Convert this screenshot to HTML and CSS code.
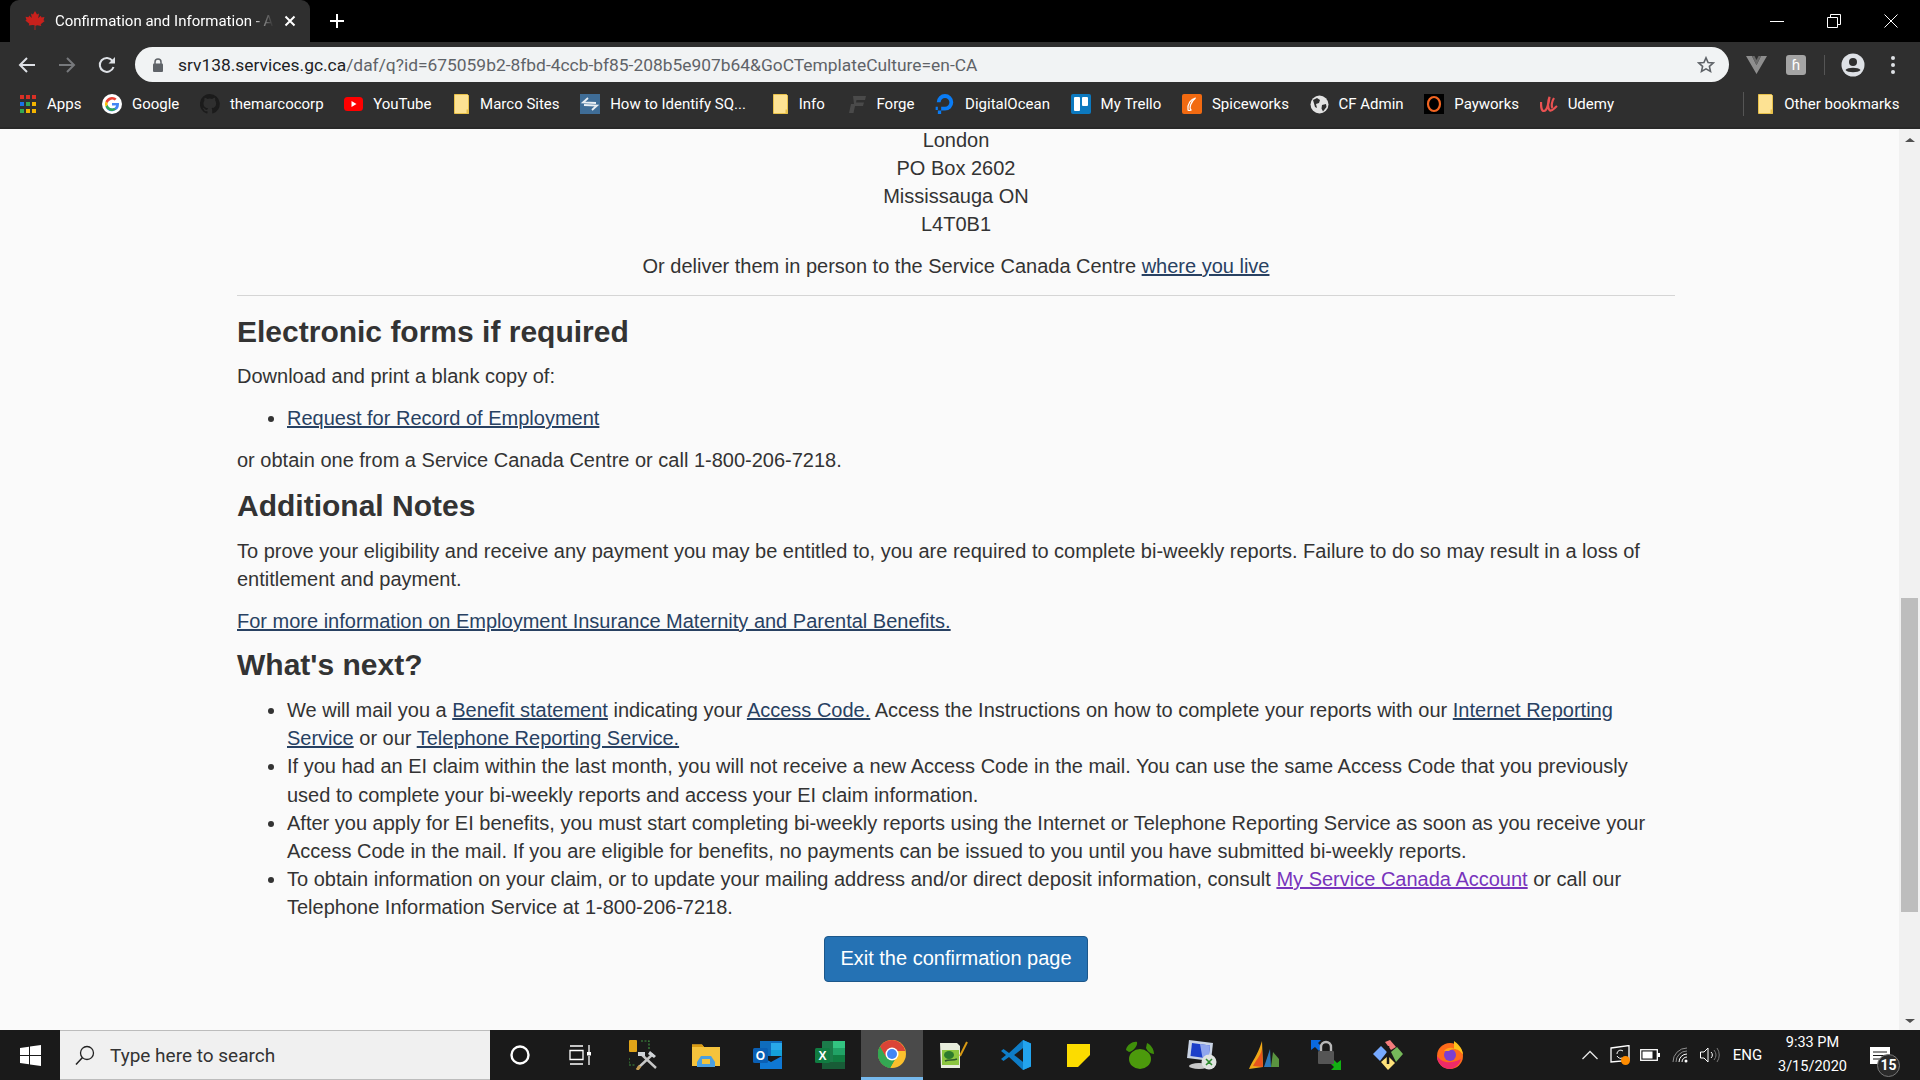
FILE: index.html
```html
<!DOCTYPE html>
<html lang="en">

<head>
    <meta charset="utf-8">
    <title>Confirmation and Information</title>
    <link rel="stylesheet" href="styles.css">
</head>

<body>
    <div class="tabstrip">
        <div class="tab">
            <svg class="favicon" width="20" height="20" viewBox="0 0 20 20"><path fill="#c8211c" d="M10 0l2 3.6 2-1-.8 4.6 2.6-2.4.7 1.7 3-.5-1 3.2 1.2.7-4 3.3.6 1.7-4-.6-1.9.4V19h-.8v-4.7l-1.9-.4-4 .6.6-1.7-4-3.3L1.500 9l-1-3.200 3 .5.7-1.700 2.600 2.400-.8-4.600 2 1z"/></svg>
            <span class="tab-title">Confirmation and Information - Apply</span>
            <svg class="tab-close" width="12" height="12" viewBox="0 0 12 12"><path d="M1.500 1.500l9 9m0-9l-9 9" stroke="#fff" stroke-width="2"/></svg>
        </div>
        <svg class="new-tab" width="16" height="16" viewBox="0 0 16 16"><path d="M8 1v14M1 8h14" stroke="#fff" stroke-width="2"/></svg>
        <div class="window-btns">
            <svg width="14" height="14" viewBox="0 0 14 14"><path d="M0 7.500h14" stroke="#fff"/></svg>
            <svg width="14" height="14" viewBox="0 0 14 14"><path d="M.5 3.500h10v10H.5zM3.500 3.500V.5h10v10h-3" fill="none" stroke="#fff"/></svg>
            <svg width="14" height="14" viewBox="0 0 14 14"><path d="M.5.5l13 13m0-13l-13 13" stroke="#fff"/></svg>
        </div>
    </div>

    <div class="toolbar">
        <svg class="nav-icon" width="18" height="18" viewBox="0 0 18 18"><path d="M17 9H2M9 2L2 9l7 7" fill="none" stroke="#dee1e6" stroke-width="2"/></svg>
        <svg class="nav-icon" width="18" height="18" viewBox="0 0 18 18"><path d="M1 9h15M9 2l7 7-7 7" fill="none" stroke="#77797c" stroke-width="2"/></svg>
        <svg class="nav-icon" width="18" height="18" viewBox="0 0 18 18"><path d="M15.500 11a7 7 0 1 1-1-6.200" fill="none" stroke="#dee1e6" stroke-width="2"/><path d="M17 1v6.500h-6.500z" fill="#dee1e6"/></svg>
        <div class="urlbar">
            <svg width="12" height="14" viewBox="0 0 12 14"><path d="M3 6V4a3 3 0 0 1 6 0v2" fill="none" stroke="#5f6368" stroke-width="1.500"/><rect x="1" y="5.500" width="10" height="8.500" rx="1" fill="#5f6368"/></svg>
            <span class="url"><b>srv138.services.gc.ca</b>/daf/q?id=675059b2-8fbd-4ccb-bf85-208b5e907b64&amp;GoCTemplateCulture=en-CA</span>
            <svg class="star" width="18" height="18" viewBox="0 0 18 18"><path d="M9 1.800l2.100 4.700 5.100.5-3.800 3.400 1.100 5-4.500-2.600-4.500 2.600 1.100-5L1.800 7l5.100-.5z" fill="none" stroke="#5f6368" stroke-width="1.600"/></svg>
        </div>
        <svg class="ext-v" width="21" height="20" viewBox="0 0 21 20"><path d="M0 1h6l4.500 9L15 1h6L10.500 19z" fill="#8e8e8e"/><path d="M6 1h2.500l2 4 2-4H15l-4.500 9z" fill="#6a6a6a"/></svg>
        <div class="ext-h">ɦ</div>
        <i class="tool-sep"></i>
        <svg class="avatar" width="24" height="24" viewBox="0 0 24 24"><circle cx="12" cy="12" r="11.500" fill="#dee1e6"/><circle cx="12" cy="9" r="4" fill="#2f2f2f"/><path d="M4.500 17c2-3 13-3 15 0-2 3-13 3-15 0z" fill="#2f2f2f"/></svg>
        <svg class="dots" width="6" height="20" viewBox="0 0 6 20"><circle cx="3" cy="3" r="2" fill="#dee1e6"/><circle cx="3" cy="10" r="2" fill="#dee1e6"/><circle cx="3" cy="17" r="2" fill="#dee1e6"/></svg>
    </div>

    <div class="bookmarks">
        <a class="bm">
            <svg width="17" height="18" viewBox="0 0 17 18"><g><rect width="4" height="4" fill="#d93025"/><rect x="6" width="4" height="4" fill="#d93025"/><rect x="12" width="4" height="4" fill="#d93025"/><rect y="7" width="4" height="4" fill="#1a73e8"/><rect x="6" y="7" width="4" height="4" fill="#34a853"/><rect x="12" y="7" width="4" height="4" fill="#f4b400"/><rect y="14" width="4" height="4" fill="#34a853"/><rect x="6" y="14" width="4" height="4" fill="#f4b400"/><rect x="12" y="14" width="4" height="4" fill="#f4b400"/></g></svg>
            Apps
        </a>
        <a class="bm">
            <svg width="20" height="20" viewBox="0 0 20 20"><circle cx="10" cy="10" r="10" fill="#fff"/><path d="M10 9v2.600h4.200A4.400 4.400 0 0 1 5.700 11L3.500 12.700A7 7 0 0 0 17 10c0-.4 0-.7-.1-1z" fill="#4285f4"/><path d="M3.500 12.700A7 7 0 0 1 3.500 7.300L5.700 9a4.400 4.400 0 0 0 0 2z" fill="#fbbc05"/><path d="M3.500 7.300A7 7 0 0 1 14.600 4.800L12.700 6.600A4.400 4.400 0 0 0 5.700 9z" fill="#ea4335"/><path d="M3.500 12.700L5.700 11A4.400 4.400 0 0 0 12 13.900l2.100 1.700A7 7 0 0 1 3.500 12.700z" fill="#34a853"/></svg>
            Google
        </a>
        <a class="bm">
            <svg width="20" height="20" viewBox="0 0 20 20"><path d="M10 0a10 10 0 0 0-3.200 19.500c.5.100.7-.2.7-.5v-1.800c-2.800.6-3.400-1.300-3.400-1.300-.5-1.200-1.100-1.500-1.100-1.500-.9-.6.100-.6.100-.6 1 .1 1.500 1 1.500 1 .9 1.500 2.300 1.100 2.900.8.100-.6.300-1.100.6-1.300-2.200-.3-4.600-1.100-4.600-5 0-1.100.4-2 1-2.700-.1-.2-.4-1.300.1-2.700 0 0 .8-.3 2.700 1a9.500 9.500 0 0 1 5 0c1.900-1.300 2.700-1 2.700-1 .5 1.400.2 2.500.1 2.700.6.700 1 1.600 1 2.700 0 3.900-2.300 4.700-4.600 5 .4.300.7.900.7 1.900V19c0 .3.200.6.700.5A10 10 0 0 0 10 0z" fill="#1b1b1b"/></svg>
            themarcocorp
        </a>
        <a class="bm bm-wide">
            <svg width="19" height="20" viewBox="0 0 19 20"><rect y="3" width="19" height="14" rx="3.500" fill="#f00"/><path d="M7.500 7v6l5-3z" fill="#fff"/></svg>
            YouTube
        </a>
        <a class="bm">
            <svg class="folder" width="16" height="20" viewBox="0 0 16 20"><path d="M.5.500h13l1 1V19.500H.5z" fill="#fde293" stroke="#e8c14a"/><path d="M12.500 15.500h2.500v4h-2.500z" fill="#e8c14a"/></svg>
            Marco Sites
        </a>
        <a class="bm">
            <svg width="20" height="20" viewBox="0 0 20 20"><rect width="20" height="20" fill="#3f6d97"/><path d="M8 4L3 8.500l13 .5M12 16l5-4.500-13-.5" fill="none" stroke="#e8eef3" stroke-width="1.800"/></svg>
            <span class="bm-long">How to Identify SQ...</span>
        </a>
        <a class="bm bm-wider">
            <svg class="folder" width="16" height="20" viewBox="0 0 16 20"><path d="M.5.500h13l1 1V19.500H.5z" fill="#fde293" stroke="#e8c14a"/><path d="M12.500 15.500h2.500v4h-2.500z" fill="#e8c14a"/></svg>
            Info
        </a>
        <a class="bm">
            <svg width="17" height="17" viewBox="0 0 17 17"><path d="M4 0h13l-1 4H7.500L7 6.500h8l-1 3.500H6l-1.500 7H0l2-9H5z" fill="#4a4a4a"/></svg>
            Forge
        </a>
        <a class="bm">
            <svg width="20" height="22" viewBox="1.500 1.500 17 20"><path d="M10 17.500V14a4 4 0 1 0-4-4H2.500A7.500 7.500 0 1 1 10 17.500z" fill="#0a7cf5"/><path d="M6.500 14h3.500v3.500H6.500zM3.500 17.500h3v3h-3zM1.500 14h2v3h-2z" fill="#0a7cf5"/></svg>
            DigitalOcean
        </a>
        <a class="bm">
            <svg width="20" height="20" viewBox="0 0 20 20"><rect width="20" height="20" rx="2" fill="#0c79bf"/><rect x="3" y="3" width="6" height="14" rx="1" fill="#fff"/><rect x="11" y="3" width="6" height="9" rx="1" fill="#fff"/></svg>
            My Trello
        </a>
        <a class="bm">
            <svg width="20" height="20" viewBox="0 0 20 20"><rect width="20" height="20" rx="2" fill="#f26a11"/><path d="M13.500 4C9 5 5 10 6 16c1 1 2 .5 3 0-2-2-.5-8 4.500-12z" fill="none" stroke="#fff" stroke-width="1.200"/></svg>
            Spiceworks
        </a>
        <a class="bm">
            <svg width="19" height="19" viewBox="0 0 19 19"><circle cx="9.500" cy="9.500" r="9" fill="#e3e3e3"/><path d="M3 5l4-2 3 2-1 3-3 1 1 4-2-1zM12 10l4-1 .5 3-3.500 4.500-1.500-3z" fill="#2f2f2f"/></svg>
            CF Admin
        </a>
        <a class="bm">
            <svg width="20" height="20" viewBox="0 0 20 20"><rect width="20" height="20" fill="#000"/><ellipse cx="10" cy="10" rx="6" ry="7" fill="none" stroke="#f26522" stroke-width="2.200"/></svg>
            Payworks
        </a>
        <a class="bm">
            <svg width="18" height="18" viewBox="0 0 18 18"><path d="M1 7c0 4 0 9 3 9s5-9 5.500-14C8 6 7 13 10 15.500c2 1 4-2 7-4.500M14 3c-2 3-3 8-1.500 10" fill="none" stroke="#ea5252" stroke-width="2.200"/></svg>
            Udemy
        </a>
        <i class="bm-sep"></i>
        <a class="bm">
            <svg class="folder" width="16" height="20" viewBox="0 0 16 20"><path d="M.5.500h13l1 1V19.500H.5z" fill="#fde293" stroke="#e8c14a"/><path d="M12.500 15.500h2.500v4h-2.500z" fill="#e8c14a"/></svg>
            Other bookmarks
        </a>
    </div>

    <div class="viewport">
        <main class="page">
            <p class="center">
                London<br>
                PO Box 2602<br>
                Mississauga ON<br>
                L4T0B1
            </p>
            <p class="center">Or deliver them in person to the Service Canada Centre <a href="#">where you live</a></p>
            <hr>
            <h2>Electronic forms if required</h2>
            <p>Download and print a blank copy of:</p>
            <ul>
                <li><a href="#">Request for Record of Employment</a></li>
            </ul>
            <p>or obtain one from a Service Canada Centre or call 1-800-206-7218.</p>
            <h2>Additional Notes</h2>
            <p>To prove your eligibility and receive any payment you may be entitled to, you are required to complete bi-weekly reports. Failure to do so may result in a loss of entitlement and payment.</p>
            <p><a href="#">For more information on Employment Insurance Maternity and Parental Benefits.</a></p>
            <h2 class="next">What's next?</h2>
            <ul class="steps">
                <li>We will mail you a <a href="#">Benefit statement</a> indicating your <a href="#">Access Code.</a> Access the Instructions on how to complete your reports with our <a href="#">Internet Reporting Service</a> or our <a href="#">Telephone Reporting Service.</a></li>
                <li>If you had an EI claim within the last month, you will not receive a new Access Code in the mail. You can use the same Access Code that you previously used to complete your bi-weekly reports and access your EI claim information.</li>
                <li>After you apply for EI benefits, you must start completing bi-weekly reports using the Internet or Telephone Reporting Service as soon as you receive your Access Code in the mail. If you are eligible for benefits, no payments can be issued to you until you have submitted bi-weekly reports.</li>
                <li>To obtain information on your claim, or to update your mailing address and/or direct deposit information, consult <a class="visited" href="#">My Service Canada Account</a> or call our Telephone Information Service at 1-800-206-7218.</li>
            </ul>
            <div class="center">
                <a class="btn-exit" href="#">Exit the confirmation page</a>
            </div>
        </main>
        <div class="scrollbar">
            <svg width="12" height="6" viewBox="0 0 12 6"><path d="M6 1l5 4H1z" fill="#505050"/></svg>
            <div class="thumb-area"><div class="thumb"></div></div>
            <svg width="12" height="6" viewBox="0 0 12 6"><path d="M6 5L1 1h10z" fill="#505050"/></svg>
        </div>
    </div>

    <div class="taskbar">
        <div class="start">
            <svg width="21" height="21" viewBox="0 0 21 21"><path d="M0 3l9-1.300V10H0zM10 1.500L21 0v10H10zM0 11h9v8.300L0 18zM10 11h11v10l-11-1.500z" fill="#fff"/></svg>
        </div>
        <div class="search">
            <svg width="20" height="20" viewBox="0 0 20 20"><circle cx="12" cy="8" r="6.500" fill="none" stroke="#222" stroke-width="1.300"/><path d="M7.500 12.500L1 19.500" stroke="#222" stroke-width="1.500"/></svg>
            <span>Type here to search</span>
        </div>
        <div class="cell">
            <svg width="20" height="20" viewBox="0 0 20 20"><circle cx="10" cy="10" r="8.500" fill="none" stroke="#fff" stroke-width="2.400"/></svg>
        </div>
        <div class="cell">
            <svg width="22" height="20" viewBox="0 0 22 20"><path d="M1 1h13M1 5.500h13v9H1zM1 19h13M20 0v7M20 11v9" fill="none" stroke="#fff" stroke-width="1.300"/><rect x="18" y="7" width="4" height="3.500" fill="#fff"/></svg>
        </div>
        <div class="apps">
            <div class="app">
                <svg width="30" height="30" viewBox="0 0 30 30"><rect x="0" y="0" width="8" height="12" rx="1" fill="#e0a418"/><path d="M12 1h8v8M0 18v7h7" fill="none" stroke="#3f8f3f" stroke-dasharray="2 1.500" stroke-width="1.200"/><path d="M9 28l15-14M27 28L12 14" stroke="#c7c7c7" stroke-width="2.400"/><path d="M9 12h7v4H9zM21 11l6 5-2 2-6-4z" fill="#d0d4d8"/><path d="M11 26l-3 4" stroke="#c69c50" stroke-width="3"/></svg>
            </div>
            <div class="app">
                <svg width="28" height="24" viewBox="0 0 28 24"><path d="M0 1.500h10l2 2.500h16v19H0z" fill="#f5c33c"/><path d="M0 1.500h10l2 2.500H0z" fill="#d99a13"/><path d="M5 19l4-6h10l4 6v5H5z" fill="#4a9fe0"/><rect x="10" y="16" width="8" height="5" fill="#f5c33c"/></svg>
            </div>
            <div class="app">
                <svg width="30" height="28" viewBox="0 0 30 28"><rect x="7" y="0" width="22" height="15" fill="#0f6cbd"/><rect x="18" y="2" width="11" height="7" fill="#28a8ea"/><rect x="18" y="9" width="11" height="6" fill="#14a0d8"/><path d="M7 15l11 6 11-6v13H7z" fill="#0f78d4"/><rect x="0" y="7" width="15" height="15" rx="1.500" fill="#0a5fb4"/><text class="ico-letter" x="7.500" y="19" text-anchor="middle">O</text></svg>
            </div>
            <div class="app">
                <svg width="30" height="28" viewBox="0 0 30 28"><rect x="7" y="0" width="23" height="28" rx="1" fill="#1b7c4a"/><rect x="18" y="0" width="12" height="7" fill="#33c481"/><rect x="18" y="7" width="12" height="7" fill="#21a366"/><rect x="18" y="14" width="12" height="7" fill="#107c41"/><rect x="7" y="21" width="23" height="7" fill="#185c37"/><rect x="0" y="7" width="15" height="15" rx="1.500" fill="#107c41"/><text class="ico-letter" x="7.500" y="19" text-anchor="middle">X</text></svg>
            </div>
            <div class="app active">
                <svg width="28" height="28" viewBox="0 0 28 28"><circle cx="14" cy="14" r="14" fill="#fbc02d"/><path d="M14 0a14 14 0 0 0-12 6.800L8 17.500l2-6.500h17.300A14 14 0 0 0 14 0z" fill="#db4437"/><path d="M2 6.800A14 14 0 0 0 12 27.900l6-10.400-10 0z" fill="#0f9d58"/><path d="M8 17.500l-6-10.700A14 14 0 0 0 12 27.900L18 17.500z" fill="#34a853"/><circle cx="14" cy="14" r="6.500" fill="#fff"/><circle cx="14" cy="14" r="5" fill="#4285f4"/></svg>
            </div>
            <div class="app">
                <svg width="28" height="28" viewBox="0 0 28 28"><path d="M0 2h17l3 3v22H1z" fill="#e8eddc"/><rect x="2" y="9" width="17" height="15" fill="#8cc63f"/><ellipse cx="9" cy="14" rx="5" ry="4" fill="#2d7a2d"/><path d="M5 20c4-2 8 0 12-2" stroke="#2d5a2d" stroke-width="1.500" fill="none"/><path d="M27 1l-7 14" stroke="#d99a13" stroke-width="2"/></svg>
            </div>
            <div class="app">
                <svg width="30" height="30" viewBox="0 0 30 30"><path d="M22 0l8 3.500v23L22 30 8 17l-5.500 4L0 19l5-4-5-4 2.500-2L8 13z" fill="#0e7dc7"/><path d="M22 0l8 3.500v23L22 30zM22 8l-9 7 9 7z" fill="#23a4ee"/><path d="M22 8v14l-9-7z" fill="#1b1b1b"/></svg>
            </div>
            <div class="app">
                <svg width="23" height="23" viewBox="0 0 23 23"><rect width="23" height="23" fill="#fcdc00"/><path d="M23 11v12H11z" fill="#1a1a1a"/></svg>
            </div>
            <div class="app">
                <svg width="30" height="28" viewBox="0 0 30 28"><ellipse cx="15" cy="18" rx="11" ry="10" fill="#4c9a0c"/><path d="M1 9C2 3 9 0 12 1c1 3-3 9-8 10zM22 2c4 2 7 6 7 11-3 0-7-3-8-6z" fill="#3f8f0a"/></svg>
            </div>
            <div class="app">
                <svg width="30" height="30" viewBox="0 0 30 30"><path d="M2 0l24 3-2 18L0 18z" fill="#c9d3e4"/><path d="M5 3l18 2.500-1.500 13L3.500 16z" fill="#1c3fc9"/><path d="M13 4l10 1.500-1.500 13-6-.7z" fill="#8fa5ee"/><ellipse cx="12" cy="26" rx="10" ry="3" fill="#c9c9c9"/><circle cx="22" cy="22" r="7.500" fill="#dfe3e0"/><path d="M19 19l3 3-3 3M25 19l-3 3 3 3" stroke="#2e8b2e" stroke-width="1.500" fill="none"/></svg>
            </div>
            <div class="app">
                <svg width="30" height="28" viewBox="0 0 30 28"><path d="M0 28C3 20 8 16 13 0l1 26z" fill="#f0a818"/><path d="M4 25c3-6 7-9 9-17l1 18z" fill="#e8531e"/><path d="M15 26L21 8l1 18z" fill="#2e79ba"/><path d="M22 26l2-15 6 7v8z" fill="#5a9440"/></svg>
            </div>
            <div class="app">
                <svg width="30" height="30" viewBox="0 0 30 30"><path d="M0 0h10l-3 3 4 4-3 4-4-4-4 3z" fill="#0a6ae0"/><path d="M30 30H20l3-3-4-4 3-4 4 4 4-3z" fill="#12b012"/><rect x="7" y="11" width="16" height="13" rx="1" fill="#555"/><path d="M10 11V7a5 5 0 0 1 10 0v4" fill="none" stroke="#b8b8b8" stroke-width="2.400"/></svg>
            </div>
            <div class="app">
                <svg width="30" height="30" viewBox="0 0 30 30"><path d="M12 2l5-2 6 7-5 3z" fill="#f47c7c"/><path d="M0 14l8-8 6 6-7 9z" fill="#77aaff"/><path d="M18 12l6-5 6 7-7 8z" fill="#75b85a"/><path d="M8 22l7-6 7 7-7 7z" fill="#ffe27a"/><path d="M15 6v18" stroke="#1a1a1a" stroke-width="2.500"/></svg>
            </div>
            <div class="app">
                <svg width="28" height="28" viewBox="0 0 28 28"><circle cx="14" cy="15" r="13" fill="#ff6b1a"/><path d="M14 28A13 13 0 0 1 1 15c4 6 12 9 24 3a13 13 0 0 1-11 10z" fill="#ee2a68"/><path d="M18 0c3 2 9 7 9 14-2-4-6-6-9-6z" fill="#ffc21a"/><circle cx="14" cy="14" r="6" fill="#7b3fd0"/><path d="M8 10c3-4 8-4 11-2-3 0-5 1-6 2z" fill="#ffa51a"/></svg>
            </div>
        </div>
        <div class="tray">
            <div class="tray-cell">
                <svg width="16" height="10" viewBox="0 0 16 10"><path d="M.5 9L8 1.500 15.500 9" fill="none" stroke="#e6e6e6" stroke-width="1.300"/></svg>
            </div>
            <div class="tray-cell">
                <svg width="20" height="20" viewBox="0 0 20 20"><path d="M1 3l18-2.500v15L1 17z" fill="none" stroke="#fff" stroke-width="1.300"/><path d="M13 6c-3-2-6 0-6 3M7 11c1 2 4 3 5 2" fill="none" stroke="#fff"/><circle cx="15.500" cy="15.500" r="4.500" fill="#ff8c00"/></svg>
            </div>
            <div class="tray-cell">
                <svg width="20" height="12" viewBox="0 0 20 12"><rect x=".7" y=".7" width="16.600" height="10.600" fill="none" stroke="#fff" stroke-width="1.300"/><rect x="2.500" y="2.500" width="10" height="7" fill="#fff"/><rect x="18" y="4" width="2" height="4" fill="#fff"/></svg>
            </div>
            <div class="tray-cell">
                <svg width="17" height="16" viewBox="0 0 17 16"><path d="M1 15A14 14 0 0 1 15 1M4 15A11 11 0 0 1 15 4" fill="none" stroke="#8f8f8f"/><path d="M7 15a8 8 0 0 1 8-8M10 15a5 5 0 0 1 5-5" fill="none" stroke="#fff"/><circle cx="14" cy="14" r="1.500" fill="#fff"/></svg>
            </div>
            <div class="tray-cell">
                <svg width="20" height="16" viewBox="0 0 20 16"><path d="M.5 5h3.500L8 1v14l-4-4H.5z" fill="none" stroke="#fff"/><path d="M11 5a4 4 0 0 1 0 6" fill="none" stroke="#fff"/><path d="M14 3a8 8 0 0 1 0 10M17 1a12 12 0 0 1 0 14" fill="none" stroke="#7a7a7a"/></svg>
            </div>
            <div class="lang">ENG</div>
            <div class="clock">
                <span>9:33 PM</span>
                <span>3/15/2020</span>
            </div>
            <div class="notify">
                <svg width="20" height="17" viewBox="0 0 20 17"><rect width="20" height="17" fill="#fff"/><path d="M3 5h14M3 8.500h14M3 12h14" stroke="#1a1a1a"/></svg>
                <span class="badge">15</span>
            </div>
        </div>
    </div>
</body>

</html>
```

FILE: styles.css
```css
* {
    box-sizing: border-box;
}

html,
body {
    margin: 0;
    height: 1080px;
    overflow: hidden;
}

body {
    display: flex;
    flex-direction: column;
    font-family: "Liberation Sans", Arial, sans-serif;
    background-color: #fafafa;
}

svg {
    flex: none;
    display: block;
}

/* browser chrome */
.tabstrip {
    height: 42px;
    flex: none;
    background-color: #000;
    display: flex;
    align-items: center;
    color: #fff;
    font-family: Roboto, sans-serif;
}

.tab {
    width: 300px;
    height: 42px;
    margin-left: 10px;
    padding: 0 14px 0 15px;
    background-color: #2f2f2f;
    border-radius: 9px 9px 0 0;
    display: flex;
    align-items: center;
}

.favicon {
    margin-right: 10px;
}

.tab-title {
    flex: 1;
    font-size: 15px;
    white-space: nowrap;
    overflow: hidden;
    -webkit-mask-image: linear-gradient(90deg, #000 88%, transparent 98%);
    mask-image: linear-gradient(90deg, #000 88%, transparent 98%);
}

.tab-close {
    margin-left: 6px;
}

.new-tab {
    margin-left: 19px;
}

.window-btns {
    margin-left: auto;
    margin-right: 22px;
    display: flex;
    gap: 43px;
}

.toolbar {
    height: 42px;
    flex: none;
    background-color: #2f2f2f;
    display: flex;
    align-items: center;
    padding: 5px 0 2px 18px;
}

.nav-icon {
    margin-right: 22px;
}

.urlbar {
    width: 1594px;
    height: 35px;
    margin-left: -3px;
    margin-right: 17px;
    padding: 0 14px 0 17px;
    background-color: #f1f3f4;
    border-radius: 18px;
    display: flex;
    align-items: center;
}

.url {
    margin-left: 14px;
    flex: 1;
    font-family: Roboto, sans-serif;
    font-size: 17.4px;
    color: #5f6368;
    white-space: nowrap;
}

.url b {
    font-weight: 400;
    color: #202124;
}

.ext-v {
    margin-right: 19px;
}

.ext-h {
    width: 20px;
    height: 20px;
    background-color: #a4a4a4;
    border-radius: 3px;
    color: #fff;
    font-size: 15px;
    line-height: 20px;
    text-align: center;
}

.tool-sep {
    width: 1px;
    height: 20px;
    margin: 0 16px 0 18px;
    background-color: #555;
}

.dots {
    margin-left: 25px;
}

.bookmarks {
    height: 45px;
    flex: none;
    background-color: #2f2f2f;
    display: flex;
    align-items: center;
    padding: 0 0 3px 20px;
    font-family: Roboto, sans-serif;
    font-size: 15px;
    color: #fff;
    border-bottom: 2px solid #292929;
}

.bm {
    display: flex;
    align-items: center;
    gap: 10px;
    margin-right: 20.6px;
    white-space: nowrap;
}

.bm-wide {
    margin-right: 22.6px;
}

.bm-wider {
    margin-right: 24.6px;
}

.bm-long {
    width: 142px;
}

.bm-sep {
    width: 1px;
    height: 24px;
    margin: 0 14px 0 auto;
    background-color: #555;
}

/* page */
.viewport {
    flex: 1;
    min-height: 0;
    display: flex;
    overflow: hidden;
}

.page {
    flex: 1;
    padding: 0 224px 0 237px;
    margin-top: -3px;
    font-size: 20px;
    line-height: 28px;
    color: #333;
}

.center {
    text-align: center;
}

p {
    margin: 0 0 14px;
}

hr {
    margin: 15px 0 20px;
    border: 0;
    border-top: 1px solid #d5d5d5;
}

h2 {
    margin: 16px 0 15px;
    font-size: 30px;
    line-height: 32px;
    font-weight: 700;
}

hr + h2 {
    margin-bottom: 14px;
}

h2.next {
    margin-top: 0;
}

ul {
    margin: 0 0 14px;
    padding-left: 50px;
}

.steps {
    line-height: 28.2px;
}

.page a {
    color: #284162;
}

.page a.visited {
    color: #7834bc;
}

.page .btn-exit {
    display: inline-block;
    height: 46px;
    padding: 0 15px;
    background-color: #2572b4;
    border: 1px solid #1c578a;
    border-radius: 4px;
    color: #fff;
    line-height: 43px;
    text-decoration: none;
}

.scrollbar {
    width: 21px;
    flex: none;
    background-color: #f1f1f1;
    display: flex;
    flex-direction: column;
    align-items: center;
    padding: 8px 0 6px;
}

.thumb-area {
    flex: 1;
    width: 100%;
    padding: 0 2px;
}

.thumb {
    height: 314px;
    margin-top: 455px;
    background-color: #bdbdbd;
}

/* windows taskbar */
.taskbar {
    height: 50px;
    flex: none;
    background-color: #1a1a1a;
    display: flex;
    align-items: center;
    color: #fff;
    font-family: Roboto, sans-serif;
}

.start {
    width: 60px;
    display: flex;
    justify-content: center;
}

.search {
    width: 430px;
    height: 50px;
    padding-left: 15px;
    background-color: #f0f0f0;
    border-top: 1px solid #bcbcbc;
    border-bottom: 1px solid #bcbcbc;
    display: flex;
    align-items: center;
    gap: 15px;
    color: #333;
    font-size: 19px;
}

.cell {
    width: 60px;
    display: flex;
    justify-content: center;
}

.apps {
    display: flex;
    margin-left: 3px;
}

.app {
    width: 62px;
    height: 50px;
    display: flex;
    align-items: center;
    justify-content: center;
}

.app.active {
    background-color: #4a4a4a;
    border-bottom: 3px solid #76b9ed;
}

.ico-letter {
    fill: #fff;
    font-family: "Liberation Sans", sans-serif;
    font-size: 12px;
    font-weight: 700;
}

.tray {
    margin-left: auto;
    display: flex;
    align-items: center;
    padding-right: 15px;
}

.tray-cell {
    width: 30px;
    display: flex;
    justify-content: center;
}

.lang {
    width: 45px;
    text-align: center;
    font-size: 15px;
}

.clock {
    width: 85px;
    display: flex;
    flex-direction: column;
    align-items: center;
    gap: 4px;
    font-size: 14.5px;
    line-height: 20px;
}

.notify {
    position: relative;
    width: 50px;
    display: flex;
    justify-content: center;
}

.badge {
    position: absolute;
    left: 22px;
    top: 7px;
    width: 23px;
    height: 23px;
    border: 1px solid #777;
    border-radius: 50%;
    background-color: #2a2a2a;
    font-size: 14px;
    font-weight: 700;
    line-height: 21px;
    text-align: center;
}
```
